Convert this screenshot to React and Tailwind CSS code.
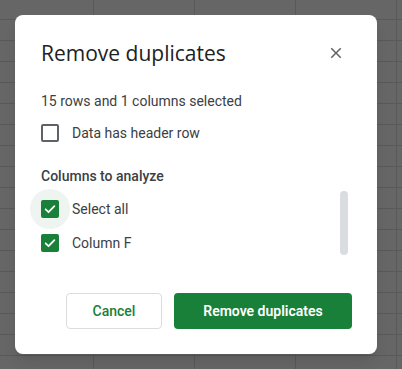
import React from "react";

const Check = () => (
  <svg width="14" height="14" viewBox="0 0 24 24" fill="none">
    <path d="M4.5 12.5l5 5L19.5 7" stroke="#fff" strokeWidth="3" strokeLinecap="round" strokeLinejoin="round" />
  </svg>
);

const CheckedBox = () => (
  <div className="w-[18px] h-[18px] rounded-[2px] bg-[#188038] flex items-center justify-center">
    <Check />
  </div>
);

export default function App() {
  return (
    <div className="w-[402px] h-[369px] bg-[#666666] bg-[linear-gradient(to_right,#595959_1px,transparent_1px),linear-gradient(to_bottom,#595959_1px,transparent_1px)] bg-[size:101px_21px] bg-[position:93px_19px] p-[15px] font-['Roboto',sans-serif]">
      <div className="w-[362px] h-[339px] bg-white rounded-[8px] shadow-lg flex flex-col pl-[26px] pr-[25px] pt-[24px] pb-[25px]">
        <div className="flex items-center justify-between h-[28px]">
          <h1 className="font-['Open_Sans',sans-serif] text-[21px] leading-[28px] text-[#202124]">Remove duplicates</h1>
          <button className="w-[32px] h-[32px] flex items-center justify-center">
            <svg width="18" height="18" viewBox="0 0 24 24" fill="#5f6368">
              <path d="M19 6.41L17.59 5 12 10.59 6.41 5 5 6.41 10.59 12 5 17.59 6.41 19 12 13.41 17.59 19 19 17.59 13.41 12z" />
            </svg>
          </button>
        </div>

        <p className="mt-[24px] text-[14px] leading-[20px] text-[#3c4043]">15 rows and 1 columns selected</p>

        <div className="mt-[12px] h-[20px] flex items-center gap-[13px]">
          <div className="w-[18px] h-[18px] rounded-[2px] border-2 border-[#5f6368]" />
          <span className="text-[14px] text-[#3c4043]">Data has header row</span>
        </div>

        <p className="mt-[23px] text-[14px] leading-[20px] font-medium text-[#3c4043]">Columns to analyze</p>

        <div className="mt-[6px] flex">
          <div className="flex-1 flex flex-col">
            <div className="h-[34px] flex items-center gap-[13px]">
              <div className="relative">
                <div className="absolute -left-[11px] -top-[11px] w-[40px] h-[40px] rounded-full bg-[#eef4f0]" />
                <div className="relative">
                  <CheckedBox />
                </div>
              </div>
              <span className="text-[14px] text-[#3c4043]">Select all</span>
            </div>
            <div className="h-[34px] flex items-center gap-[13px]">
              <CheckedBox />
              <span className="text-[14px] text-[#3c4043]">Column F</span>
            </div>
          </div>
          <div className="-mt-px mr-[4px] w-[8px] h-[64px] rounded-full bg-[#dadce0]" />
        </div>

        <div className="mt-[33px] flex justify-end gap-[12px]">
          <button className="w-[96px] h-[36px] rounded-[4px] border border-[#dadce0] text-[14px] font-medium text-[#188038]">Cancel</button>
          <button className="w-[178px] h-[36px] rounded-[4px] bg-[#188038] text-[14px] font-semibold text-white">Remove duplicates</button>
        </div>
      </div>
    </div>
  );
}
